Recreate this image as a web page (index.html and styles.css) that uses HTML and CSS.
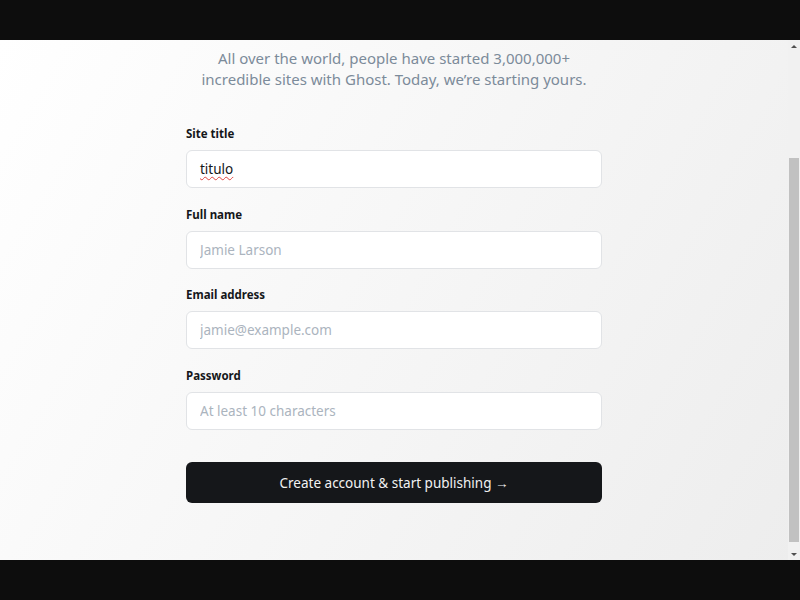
FILE: index.html
```html
<!DOCTYPE html>
<html lang="en">
<head>
<meta charset="utf-8">
<title>Ghost setup</title>
<link rel="stylesheet" href="styles.css">
</head>
<body>
<div class="letterbox"></div>
<div class="frame">
  <main class="page">
    <p class="intro">All over the world, people have started 3,000,000+<br>incredible sites with Ghost. Today, we’re starting yours.</p>
    <form class="form">
      <div class="field">
        <label class="label" for="title">Site title</label>
        <div class="input input-filled" id="title" role="textbox" contenteditable="true" spellcheck="false"><span class="misspelled">titulo</span></div>
      </div>
      <div class="field">
        <label class="label" for="name">Full name</label>
        <input class="input" id="name" type="text" placeholder="Jamie Larson">
      </div>
      <div class="field">
        <label class="label" for="email">Email address</label>
        <input class="input" id="email" type="email" placeholder="jamie@example.com">
      </div>
      <div class="field">
        <label class="label" for="password">Password</label>
        <input class="input" id="password" type="password" placeholder="At least 10 characters">
      </div>
      <button class="submit" type="button">Create account &amp; start publishing →</button>
    </form>
  </main>
  <div class="scrollbar">
    <div class="sb-btn"><span class="arrow-up"></span></div>
    <div class="sb-track"><div class="sb-thumb"></div></div>
    <div class="sb-btn"><span class="arrow-down"></span></div>
  </div>
</div>
<div class="letterbox"></div>
</body>
</html>
```

FILE: styles.css
```css
* { box-sizing: border-box; }
html, body { margin: 0; padding: 0; }
body {
  background: #0d0d0d;
  font-family: "Noto Sans", "Open Sans", sans-serif;
  width: 800px;
  height: 600px;
  overflow: hidden;
}
.letterbox { height: 40px; background: #0d0d0d; }
.frame {
  height: 520px;
  display: flex;
  background: linear-gradient(120deg, #ffffff 0%, #f6f6f6 50%, #ededed 100%);
}
.page {
  flex: 1;
  overflow: hidden;
  display: flex;
  flex-direction: column;
  align-items: center;
  padding-top: 8px;
}
.intro {
  margin: 0;
  text-align: center;
  font-size: 15px;
  line-height: 21px;
  color: #7c8b9a;
}
.form {
  width: 416px;
  margin-top: 36px;
  display: flex;
  flex-direction: column;
  gap: 18.5px;
}
.field { display: flex; flex-direction: column; gap: 8px; }
.label {
  font-size: 11.5px;
  line-height: 16px;
  font-weight: 700;
  color: #15171a;
}
.input {
  height: 38px;
  border: 1px solid #e1e3e6;
  border-radius: 6px;
  background: #fff;
  padding: 0 13px;
  font-family: inherit;
  font-size: 13.5px;
  color: #15171a;
  outline: none;
}
.input::placeholder { color: #abb4be; }
.input-filled {
  display: flex;
  align-items: center;
}
.misspelled {
  text-decoration: underline wavy #e0443e;
  text-decoration-thickness: 1px;
  text-decoration-skip-ink: none;
  text-underline-offset: 2px;
}
.submit {
  margin-top: 14px;
  height: 41px;
  border: 0;
  border-radius: 6px;
  background: #15171a;
  color: #f2f2f2;
  font-family: inherit;
  font-size: 13.5px;
}
.scrollbar {
  width: 12px;
  display: flex;
  flex-direction: column;
  background: #f1f1f1;
}
.sb-btn {
  height: 12px;
  display: flex;
  align-items: center;
  justify-content: center;
}
.arrow-up, .arrow-down {
  width: 0; height: 0;
  border-left: 3px solid transparent;
  border-right: 3px solid transparent;
}
.arrow-up { border-bottom: 3px solid #505050; }
.arrow-down { border-top: 3px solid #505050; }
.sb-track { flex: 1; padding: 106px 1px 6px 1px; }
.sb-thumb { height: 384px; background: #c1c1c1; }
```
